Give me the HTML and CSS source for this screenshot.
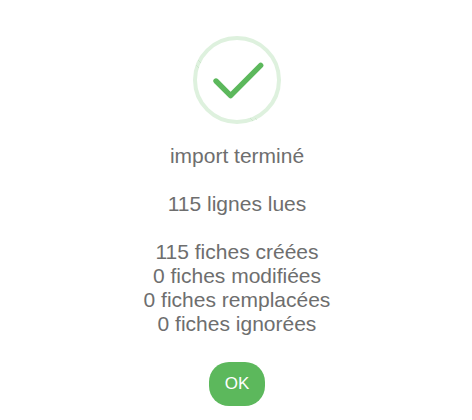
FILE: index.html
```html
<!doctype html>
<html lang="fr">

<head>
    <meta charset="UTF-8">
    <title>Import</title>
    <link rel="stylesheet" href="styles.css">
</head>

<body>
    <div class="popup">
        <svg class="icon" viewBox="0 0 88 88">
            <circle class="ring" cx="44" cy="44" r="42"></circle>
            <path class="seam" d="M5 24L8 27M3 29L6 32M57 82L60 85M62 82L64 84"></path>
            <path class="tick" d="M23 45L37.6 59.6L67.7 29.3"></path>
        </svg>
        <div class="message">
            import terminé<br><br>
            115 lignes lues<br><br>
            115 fiches créées<br>
            0 fiches modifiées<br>
            0 fiches remplacées<br>
            0 fiches ignorées
        </div>
        <button class="btn-ok" type="button">OK</button>
    </div>
</body>

</html>
```

FILE: styles.css
```css
* {
    margin: 0;
    padding: 0;
    box-sizing: border-box;
}

body {
    background-color: #fff;
    font-family: "Liberation Sans", Arial, sans-serif;
}

.popup {
    display: flex;
    flex-direction: column;
    align-items: center;
    width: 474px;
    padding-top: 36px;
}

.icon {
    width: 88px;
    height: 88px;
    fill: none;
}

.ring {
    stroke: #def1de;
    stroke-width: 4;
}

.seam {
    stroke: #bcdcbc;
    stroke-width: 0.5;
}

.tick {
    stroke: #5cb85c;
    stroke-width: 5.4;
    stroke-linecap: round;
    stroke-linejoin: round;
}

.message {
    margin-top: 20px;
    color: #6e6e6e;
    font-size: 21px;
    line-height: 24px;
    text-align: center;
}

.btn-ok {
    width: 56px;
    height: 44px;
    margin-top: 26px;
    border: 0;
    border-radius: 20px;
    background-color: #5cb85c;
    color: #fff;
    font-family: inherit;
    font-size: 17px;
    cursor: pointer;
}
```
